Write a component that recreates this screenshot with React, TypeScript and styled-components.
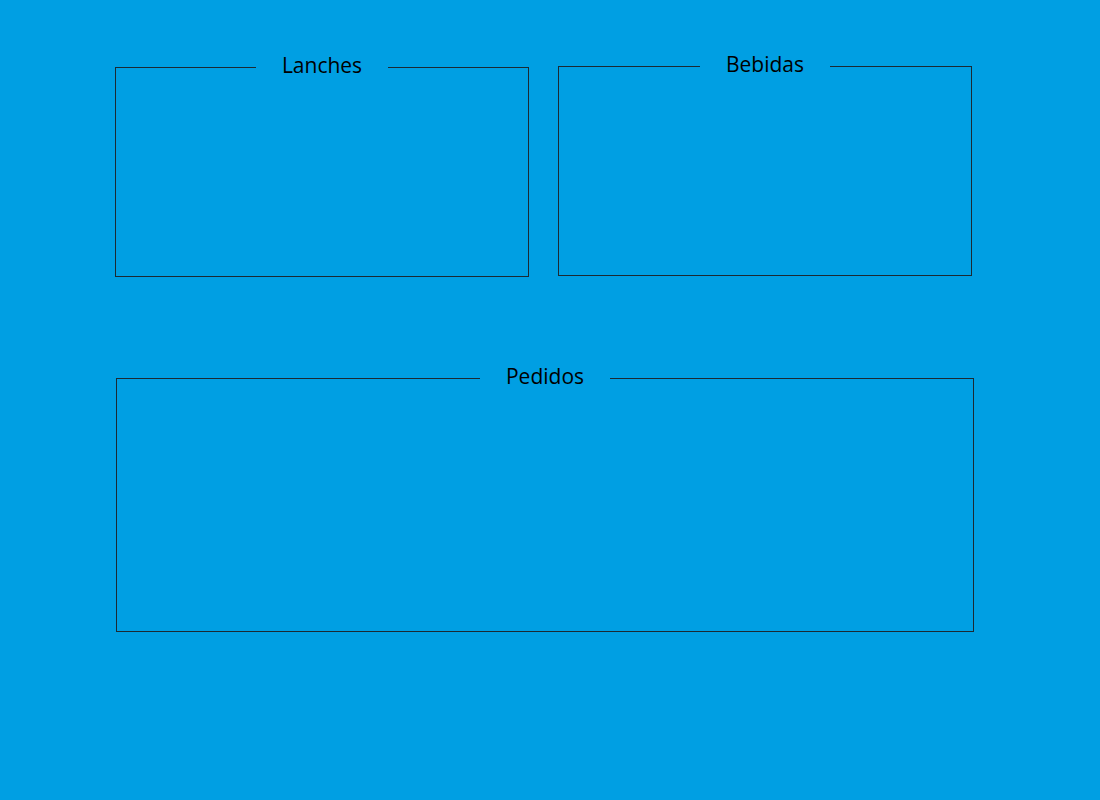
import React from "react";
import styled, { createGlobalStyle } from "styled-components";

const GlobalStyle = createGlobalStyle`
  html, body {
    margin: 0;
    padding: 0;
    background: #009fe3;
  }
  body {
    font-family: "Open Sans", "Noto Sans", sans-serif;
  }
`;

const Page = styled.div`
  width: 1100px;
  height: 800px;
  box-sizing: border-box;
  background: #009fe3;
  padding: 51px 0 0 115px;
  display: flex;
  flex-direction: column;
  gap: 86px;
`;

const Row = styled.div`
  display: grid;
  grid-template-columns: 414px 414px;
  column-gap: 29px;
  align-items: start;
`;

const Panel = styled.fieldset<{ $w?: number; $h: number; $top?: number; $left?: number }>`
  box-sizing: border-box;
  margin: ${(p) => p.$top ?? 0}px 0 0 ${(p) => p.$left ?? 0}px;
  padding: 0;
  width: ${(p) => (p.$w ? `${p.$w}px` : "auto")};
  height: ${(p) => p.$h}px;
  min-width: 0;
  border: 1px solid #1b2a33;
`;

const Title = styled.legend`
  margin: 0 auto;
  padding: 0 26px 4px;
  font-size: 21px;
  line-height: 26px;
  color: #000;
  font-family: "Open Sans", "Noto Sans", sans-serif;
`;

export default function App() {
  return (
    <>
      <GlobalStyle />
      <Page>
        <Row>
          <Panel $h={225} $top={1}>
            <Title>Lanches</Title>
          </Panel>
          <Panel $h={225}>
            <Title>Bebidas</Title>
          </Panel>
        </Row>
        <Panel $w={858} $h={269} $left={1}>
          <Title>Pedidos</Title>
        </Panel>
      </Page>
    </>
  );
}
